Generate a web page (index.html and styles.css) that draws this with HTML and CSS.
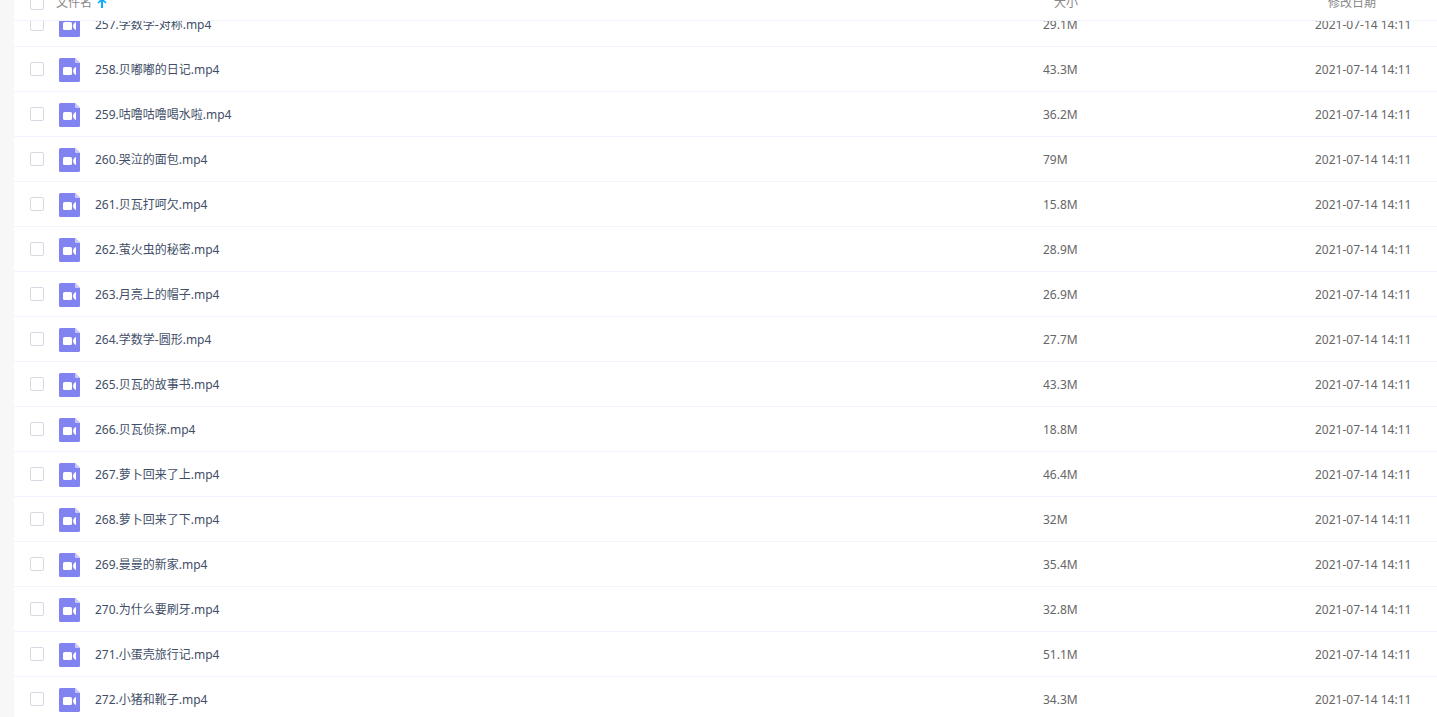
FILE: index.html
```html
<!DOCTYPE html>
<html lang="zh-CN">
<head>
    <meta charset="UTF-8">
    <meta name="viewport" content="width=device-width, initial-scale=1.0">
    <title>文件列表</title>
    <link rel="stylesheet" href="styles.css">
</head>
<body>
    <!-- Video file icon, reused by every row -->
    <svg class="sprite" aria-hidden="true">
        <symbol id="video" viewBox="0 0 21 24">
            <path d="M1.500 0H16l5 5v17.500a1.500 1.500 0 0 1-1.500 1.500h-18a1.500 1.500 0 0 1-1.500-1.500v-21A1.500 1.500 0 0 1 1.500 0z" fill="#8183f1"/>
            <path d="M16 0l5 5h-4a1 1 0 0 1-1-1z" fill="#c9caf9"/>
            <rect x="4" y="9" width="9" height="8" rx="1.500" fill="#fff"/>
            <path d="M17 9v8c-1.500-.3-3-2.200-3-4s1.500-3.700 3-4z" fill="#fff"/>
        </symbol>
    </svg>
    <main class="file-pane">
        <table class="file-table file-head">
            <colgroup><col class="col-check"><col><col class="col-size"><col class="col-date"></colgroup>
            <thead>
                <tr>
                    <th><input type="checkbox" aria-label="全选"></th>
                    <th>文件名 <svg class="sort-arrow" width="10" height="10" viewBox="0 0 10 10"><path d="M5 0l4.500 4.500-1 1L6 3.500V10H4V3.500l-2.500 2-1-1z" fill="#09aaff"/></svg></th>
                    <th class="th-size">大小</th>
                    <th class="th-date">修改日期</th>
                </tr>
            </thead>
        </table>
        <div class="file-scroll">
            <table class="file-table file-body">
                <colgroup><col class="col-check"><col><col class="col-size"><col class="col-date"></colgroup>
                <tbody>
                    <tr><td><input type="checkbox" id="f257"></td><td><label class="file-name" for="f257"><svg class="file-icon"><use href="#video"/></svg>257.学数学-对称.mp4</label></td><td>29.1M</td><td>2021-07-14 14:11</td></tr>
                    <tr><td><input type="checkbox" id="f258"></td><td><label class="file-name" for="f258"><svg class="file-icon"><use href="#video"/></svg>258.贝嘟嘟的日记.mp4</label></td><td>43.3M</td><td>2021-07-14 14:11</td></tr>
                    <tr><td><input type="checkbox" id="f259"></td><td><label class="file-name" for="f259"><svg class="file-icon"><use href="#video"/></svg>259.咕噜咕噜喝水啦.mp4</label></td><td>36.2M</td><td>2021-07-14 14:11</td></tr>
                    <tr><td><input type="checkbox" id="f260"></td><td><label class="file-name" for="f260"><svg class="file-icon"><use href="#video"/></svg>260.哭泣的面包.mp4</label></td><td>79M</td><td>2021-07-14 14:11</td></tr>
                    <tr><td><input type="checkbox" id="f261"></td><td><label class="file-name" for="f261"><svg class="file-icon"><use href="#video"/></svg>261.贝瓦打呵欠.mp4</label></td><td>15.8M</td><td>2021-07-14 14:11</td></tr>
                    <tr><td><input type="checkbox" id="f262"></td><td><label class="file-name" for="f262"><svg class="file-icon"><use href="#video"/></svg>262.萤火虫的秘密.mp4</label></td><td>28.9M</td><td>2021-07-14 14:11</td></tr>
                    <tr><td><input type="checkbox" id="f263"></td><td><label class="file-name" for="f263"><svg class="file-icon"><use href="#video"/></svg>263.月亮上的帽子.mp4</label></td><td>26.9M</td><td>2021-07-14 14:11</td></tr>
                    <tr><td><input type="checkbox" id="f264"></td><td><label class="file-name" for="f264"><svg class="file-icon"><use href="#video"/></svg>264.学数学-圆形.mp4</label></td><td>27.7M</td><td>2021-07-14 14:11</td></tr>
                    <tr><td><input type="checkbox" id="f265"></td><td><label class="file-name" for="f265"><svg class="file-icon"><use href="#video"/></svg>265.贝瓦的故事书.mp4</label></td><td>43.3M</td><td>2021-07-14 14:11</td></tr>
                    <tr><td><input type="checkbox" id="f266"></td><td><label class="file-name" for="f266"><svg class="file-icon"><use href="#video"/></svg>266.贝瓦侦探.mp4</label></td><td>18.8M</td><td>2021-07-14 14:11</td></tr>
                    <tr><td><input type="checkbox" id="f267"></td><td><label class="file-name" for="f267"><svg class="file-icon"><use href="#video"/></svg>267.萝卜回来了上.mp4</label></td><td>46.4M</td><td>2021-07-14 14:11</td></tr>
                    <tr><td><input type="checkbox" id="f268"></td><td><label class="file-name" for="f268"><svg class="file-icon"><use href="#video"/></svg>268.萝卜回来了下.mp4</label></td><td>32M</td><td>2021-07-14 14:11</td></tr>
                    <tr><td><input type="checkbox" id="f269"></td><td><label class="file-name" for="f269"><svg class="file-icon"><use href="#video"/></svg>269.曼曼的新家.mp4</label></td><td>35.4M</td><td>2021-07-14 14:11</td></tr>
                    <tr><td><input type="checkbox" id="f270"></td><td><label class="file-name" for="f270"><svg class="file-icon"><use href="#video"/></svg>270.为什么要刷牙.mp4</label></td><td>32.8M</td><td>2021-07-14 14:11</td></tr>
                    <tr><td><input type="checkbox" id="f271"></td><td><label class="file-name" for="f271"><svg class="file-icon"><use href="#video"/></svg>271.小蛋壳旅行记.mp4</label></td><td>51.1M</td><td>2021-07-14 14:11</td></tr>
                    <tr><td><input type="checkbox" id="f272"></td><td><label class="file-name" for="f272"><svg class="file-icon"><use href="#video"/></svg>272.小猪和靴子.mp4</label></td><td>34.3M</td><td>2021-07-14 14:11</td></tr>
                </tbody>
            </table>
        </div>
    </main>
</body>
</html>
```

FILE: styles.css
```css
* {
    box-sizing: border-box;
}
body {
    margin: 0;
    height: 100vh;
    overflow: hidden;
    display: flex;
    background-color: #f7f7f7;
    color: #666;
    font-family: "Noto Sans", "Noto Sans CJK SC", sans-serif;
    font-size: 12px;
    line-height: 16px;
}
.sprite {
    display: none;
}
.file-pane {
    flex: 1;
    margin-top: -14px; /* header is partly scrolled out of view */
    margin-left: 14px;
    display: flex;
    flex-direction: column;
    background-color: #fff;
}
.file-table {
    width: 100%;
    table-layout: fixed;
    border-collapse: separate;
    border-spacing: 0;
}
.col-check {
    width: 42px;
}
.col-size {
    width: 272px;
}
.col-date {
    width: 122px;
}
th, td {
    padding: 0;
    border-bottom: 1px solid #f0f5fd;
    text-align: left;
    vertical-align: middle;
    white-space: nowrap;
}
th {
    height: 35px;
    color: #888;
    font-weight: normal;
}
th.th-size {
    padding-left: 11px;
}
th.th-date {
    padding-left: 13px;
}
td {
    height: 45px;
}
td + td {
    padding-top: 2px;
}
th:first-child, td:first-child {
    padding-left: 16px;
}
input[type="checkbox"] {
    appearance: none;
    display: block;
    width: 14px;
    height: 14px;
    margin: 0;
    border: 1px solid #d5dae2;
    border-radius: 2px;
    background-color: #fff;
}
input[type="checkbox"]:checked {
    background-color: #09aaff;
}
.sort-arrow {
    margin-left: 2px;
    vertical-align: -1px;
}
.file-scroll {
    flex: 1;
    min-height: 0;
    overflow: hidden;
}
.file-body {
    margin-top: -19px; /* first row slides under the header */
}
.file-name {
    display: flex;
    align-items: center;
    padding-left: 3px;
    color: #424e67;
}
.file-icon {
    width: 21px;
    height: 24px;
    margin-right: 15px;
}
```
